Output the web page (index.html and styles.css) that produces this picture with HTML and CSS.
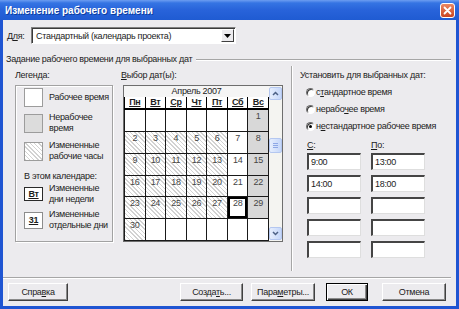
FILE: index.html
```html
<!DOCTYPE html>
<html lang="ru">
  <head>
    <meta charset="UTF-8" />
    <meta name="viewport" content="width=device-width, initial-scale=1.0" />
    <title>Изменение рабочего времени</title>
    <link rel="stylesheet" href="styles.css">
  </head>
  <body>
    <div class="window">
      <!-- Title bar -->
      <div class="titlebar">
        <span class="title">Изменение рабочего времени</span>
        <span class="close-btn">
          <svg width="15" height="15" viewBox="0 0 15 15">
            <defs>
              <linearGradient id="closeFill" x1="0" y1="0" x2="0" y2="1">
                <stop offset="0" stop-color="#ec8a66" />
                <stop offset="1" stop-color="#c9411d" />
              </linearGradient>
            </defs>
            <rect x="0.5" y="0.5" width="14" height="14" rx="2.5" fill="url(#closeFill)" stroke="#fff" />
            <path d="M4.5 4.5l6 6M10.5 4.5l-6 6" stroke="#fff" stroke-width="1.8" stroke-linecap="round" />
          </svg>
        </span>
      </div>

      <div class="dialog">
        <!-- Calendar selector -->
        <div class="for-row">
          <span class="for-label">Д<u>л</u>я:</span>
          <div class="select">
            <span class="select-text">Стандартный (календарь проекта)</span>
            <span class="select-arrow">
              <svg width="7" height="4" viewBox="0 0 7 4"><path d="M0 0h7L3.5 4z" fill="#000" /></svg>
            </span>
          </div>
        </div>

        <div class="group-title">
          <span>Задание рабочего времени для выбранных дат</span>
          <span class="group-line"></span>
        </div>

        <div class="panels">
          <!-- Legend -->
          <div class="legend">
            <div class="caption">Легенда:</div>
            <div class="legend-box">
              <div class="key key-1"><span class="swatch"></span><span>Рабочее время</span></div>
              <div class="key key-2"><span class="swatch off"></span><span>Нерабочее<br>время</span></div>
              <div class="key key-3"><span class="swatch ch"></span><span>Измененные<br>рабочие часы</span></div>
              <div class="in-cal">В этом календаре:</div>
              <div class="key key-4"><span class="mark">Вт</span><span>Измененные<br>дни недели</span></div>
              <div class="key key-5"><span class="mark mark-day">31</span><span>Измененные<br>отдельные дни</span></div>
            </div>
          </div>

          <!-- Date picker -->
          <div class="picker">
            <div class="caption"><u>В</u>ыбор дат(ы):</div>
            <div class="calendar">
              <div class="month">
                <div class="month-title">Апрель 2007</div>
                <div class="weekdays">
                  <span>Пн</span><span>Вт</span><span>Ср</span><span>Чт</span><span>Пт</span><span>Сб</span><span>Вс</span>
                </div>
                <div class="days" id="days"></div>
              </div>
              <div class="scrollbar">
                <span class="sb-btn">
                  <svg width="7" height="5" viewBox="0 0 7 5"><path d="M1 4l2.5-2.5L6 4" stroke="#4d6185" stroke-width="1.5" fill="none" /></svg>
                </span>
                <span class="sb-thumb"><i></i><i></i><i></i></span>
                <span class="sb-btn sb-down">
                  <svg width="7" height="5" viewBox="0 0 7 5"><path d="M1 1l2.5 2.5L6 1" stroke="#4d6185" stroke-width="1.5" fill="none" /></svg>
                </span>
              </div>
            </div>
          </div>

          <div class="vsep"></div>

          <!-- Set for selected dates -->
          <div class="setter">
            <div class="caption">Установить для выбранных дат:</div>
            <div class="radios">
              <div class="radio"><span class="radio-dot"></span><span>с<u>т</u>андартное время</span></div>
              <div class="radio"><span class="radio-dot"></span><span>нерабо<u>ч</u>ее время</span></div>
              <div class="radio"><span class="radio-dot on"></span><span>н<u>е</u>стандартное рабочее время</span></div>
            </div>
            <div class="times-head">
              <span><u>С</u>:</span>
              <span><u>П</u>о:</span>
            </div>
            <div class="times">
              <span class="field">9:00</span><span class="field">13:00</span>
              <span class="field">14:00</span><span class="field">18:00</span>
              <span class="field"></span><span class="field"></span>
              <span class="field"></span><span class="field"></span>
              <span class="field"></span><span class="field"></span>
            </div>
          </div>
        </div>

        <div class="bottom-sep"></div>

        <!-- Buttons -->
        <div class="buttons">
          <span class="btn btn-help">Спра<u>в</u>ка</span>
          <span class="btn btn-new">Созда<u>т</u>ь...</span>
          <span class="btn btn-options">Пара<u>м</u>етры...</span>
          <span class="btn btn-ok default">ОК</span>
          <span class="btn btn-cancel">Отмена</span>
        </div>
      </div>
    </div>

    <script>
      // April 2007 starts on a Sunday; Saturdays are working days here
      const daysGrid = document.getElementById("days");
      for (let i = 0; i < 42; i++) {
        const day = i - 5;
        const col = i % 7;
        const cell = document.createElement("span");
        cell.className = "day";
        if (day >= 1 && day <= 30) {
          cell.textContent = day;
          if (col === 6) cell.classList.add("off");
          else if (col < 5) cell.classList.add("ch");
          if (day === 28) cell.classList.add("sel");
        }
        daysGrid.appendChild(cell);
      }
    </script>
  </body>
</html>
```

FILE: styles.css
```css
body {
  margin: 0;
  font-family: "Liberation Sans", Arial, sans-serif;
  font-size: 9px;
  letter-spacing: -0.3px;
  color: #1c1c1c;
  background: #fff;
}

u {
  text-decoration: underline;
}

.window {
  width: 459px;
  height: 309px;
  display: flex;
  flex-direction: column;
  background: #1f55d2;
  overflow: hidden;
}

/* Title bar */
.titlebar {
  height: 20px;
  flex: none;
  display: flex;
  align-items: center;
  justify-content: space-between;
  padding: 0 4px 0 5px;
  background: linear-gradient(#6d9df1 0, #3574e3 3px, #2863da 50%, #1f5bd2 100%);
}

.title {
  color: #fff;
  font-weight: bold;
  font-size: 10px;
  letter-spacing: 0;
  text-shadow: 1px 1px 0 #0c3d9e;
}

.close-btn {
  width: 15px;
  height: 15px;
  display: flex;
}

.dialog {
  flex: 1;
  margin: 0 3px 3px;
  background: #ecebee;
  display: flex;
  flex-direction: column;
}

/* Calendar selector */
.for-row {
  display: flex;
  align-items: center;
  height: 17px;
  margin-top: 7px;
  padding-left: 4px;
}

.for-label {
  width: 24px;
}

.select {
  width: 205px;
  height: 17px;
  box-sizing: border-box;
  background: #fff;
  border: 1px solid;
  border-color: #808080 #fff #fff #808080;
  box-shadow: inset 1px 1px 0 #3a3a3a;
  display: flex;
  align-items: center;
  justify-content: space-between;
}

.select-text {
  padding-left: 4px;
}

.select-arrow {
  width: 13px;
  height: 13px;
  margin-right: 1px;
  box-sizing: border-box;
  background: #ecebee;
  border: 1px solid;
  border-color: #fff #404040 #404040 #fff;
  display: flex;
  align-items: center;
  justify-content: center;
}

.group-title {
  display: flex;
  align-items: center;
  gap: 4px;
  margin-top: 10px;
  padding: 0 5px 0 3px;
  line-height: 11px;
}

.group-line {
  flex: 1;
  border-top: 1px solid #a6a6a6;
  border-bottom: 1px solid #fff;
}

.panels {
  display: flex;
  height: 205px;
  margin-top: 1px;
  padding-left: 12px;
}

.caption {
  margin-top: 4px;
  line-height: 11px;
}

/* Legend */
.legend {
  width: 98px;
}

.legend-box {
  height: 157px;
  margin-top: 4px;
  box-sizing: border-box;
  border: 1px solid #a2a2a2;
  box-shadow: inset 1px 1px 0 #fff, 1px 1px 0 #fff;
  padding: 2px 0 0 8px;
}

.key {
  display: flex;
  align-items: center;
  gap: 6px;
  line-height: 11px;
  white-space: nowrap;
}

.key-2,
.key-3,
.key-4,
.key-5 {
  height: 22px;
}

.key-2 {
  margin-top: 5px;
}

.key-3 {
  margin-top: 6px;
}

.key-4 {
  margin-top: 1px;
}

.key-5 {
  margin-top: 4px;
}

.in-cal {
  margin-top: 9px;
  line-height: 11px;
}

.swatch {
  width: 19px;
  height: 19px;
  flex: none;
  box-sizing: border-box;
  border: 1px solid #9c9c9c;
  background: #fff;
}

.swatch.off {
  background: #dcdcdc;
}

.swatch.ch,
.day.ch {
  background: repeating-linear-gradient(45deg, #d2d2d2 0 1px, #fff 1px 3px);
}

.mark {
  width: 19px;
  height: 14px;
  flex: none;
  box-sizing: border-box;
  border: 1px solid #2a2a2a;
  background: #fff;
  font-weight: bold;
  text-decoration: underline;
  text-align: center;
  line-height: 12px;
}

.mark-day {
  height: 17px;
  line-height: 15px;
  border-color: #8c8c8c;
}

/* Date picker */
.picker {
  width: 162px;
  margin-left: 8px;
}

.calendar {
  width: 160px;
  height: 157px;
  margin: 4px 0 0 2px;
  box-sizing: border-box;
  border: 1px solid #6e6e6e;
  display: flex;
  background: #fff;
}

.month {
  width: 145px;
  display: flex;
  flex-direction: column;
}

.month-title {
  height: 11px;
  line-height: 11px;
  text-align: center;
  background: #f5f5f5;
}

.weekdays {
  height: 13px;
  box-sizing: border-box;
  display: grid;
  grid-template-columns: repeat(7, 1fr);
  gap: 1px;
  padding: 0 1px;
  background: #000;
  border-bottom: 2px solid #000;
}

.weekdays span {
  background: #fff;
  font-weight: bold;
  text-decoration: underline;
  text-align: center;
  line-height: 11px;
}

.days {
  flex: 1;
  display: grid;
  grid-template-columns: repeat(7, 1fr);
  grid-template-rows: repeat(6, 1fr);
  gap: 1px;
  padding: 0 1px 1px;
  background: #1a1a1a;
}

.day {
  background: #fff;
  text-align: center;
  line-height: 11px;
  padding-top: 1px;
  color: #444;
}

.day.off {
  background: #d8d8d8;
}

.day.sel {
  box-shadow: inset 0 0 0 2px #000;
}

.scrollbar {
  width: 13px;
  display: flex;
  flex-direction: column;
  background: #f4f4f1;
}

.sb-btn,
.sb-thumb {
  box-sizing: border-box;
  border: 1px solid #b4c7f0;
  border-radius: 2px;
  background: linear-gradient(90deg, #e6eefd, #c5d7fa);
  display: flex;
  align-items: center;
  justify-content: center;
}

.sb-btn {
  height: 13px;
  margin-top: 1px;
}

.sb-down {
  margin-top: auto;
  margin-bottom: 1px;
}

.sb-thumb {
  height: 15px;
  margin-top: 38px;
  flex-direction: column;
  gap: 1px;
}

.sb-thumb i {
  width: 5px;
  height: 1px;
  background: #8ea8e6;
}

.vsep {
  margin-left: 8px;
  border-left: 1px solid #a6a6a6;
  border-right: 1px solid #fff;
}

/* Set for selected dates */
.setter {
  padding-left: 7px;
}

.radios {
  display: flex;
  flex-direction: column;
  gap: 6px;
  margin-top: 6px;
  padding-left: 6px;
}

.radio {
  display: flex;
  align-items: center;
  gap: 1px;
  line-height: 11px;
}

.radio-dot {
  width: 9px;
  height: 9px;
  box-sizing: border-box;
  border-radius: 50%;
  border: 1px solid;
  border-color: #6f6f6f #fff #fff #6f6f6f;
  box-shadow: inset 1px 1px 0 #3a3a3a;
  background: #fff;
  display: flex;
  align-items: center;
  justify-content: center;
}

.radio-dot.on::after {
  content: "";
  width: 3px;
  height: 3px;
  border-radius: 50%;
  background: #000;
}

.times-head,
.times {
  display: grid;
  grid-template-columns: 54px 54px;
  column-gap: 10px;
  padding-left: 7px;
}

.times-head {
  margin-top: 8px;
  line-height: 11px;
}

.times {
  row-gap: 5px;
  margin-top: 2px;
}

.field {
  height: 17px;
  box-sizing: border-box;
  background: #fff;
  border-top: 2px solid #454545;
  border-left: 2px solid #454545;
  border-right: 1px solid #dedede;
  border-bottom: 1px solid #dedede;
  padding-left: 2px;
  line-height: 14px;
}

/* Buttons */
.bottom-sep {
  margin: 6px 5px 0 0;
  border-top: 1px solid #a6a6a6;
  border-bottom: 1px solid #fff;
}

.buttons {
  display: flex;
  margin-top: 4px;
  padding-left: 5px;
}

.btn {
  height: 18px;
  box-sizing: border-box;
  background: #ecebee;
  border: 1px solid;
  border-color: #fff #404040 #404040 #fff;
  box-shadow: inset -1px -1px 0 #8a8a8a;
  text-align: center;
  line-height: 16px;
}

.btn.default {
  border-color: #000;
  box-shadow: inset 1px 1px 0 #fff, inset -1px -1px 0 #404040, inset -2px -2px 0 #8a8a8a;
}

.btn-help {
  width: 60px;
}

.btn-new {
  width: 63px;
  margin-left: 112px;
}

.btn-options {
  width: 64px;
  margin-left: 8px;
}

.btn-ok {
  width: 42px;
  margin-left: 11px;
}

.btn-cancel {
  width: 64px;
  margin-left: 14px;
}
```
